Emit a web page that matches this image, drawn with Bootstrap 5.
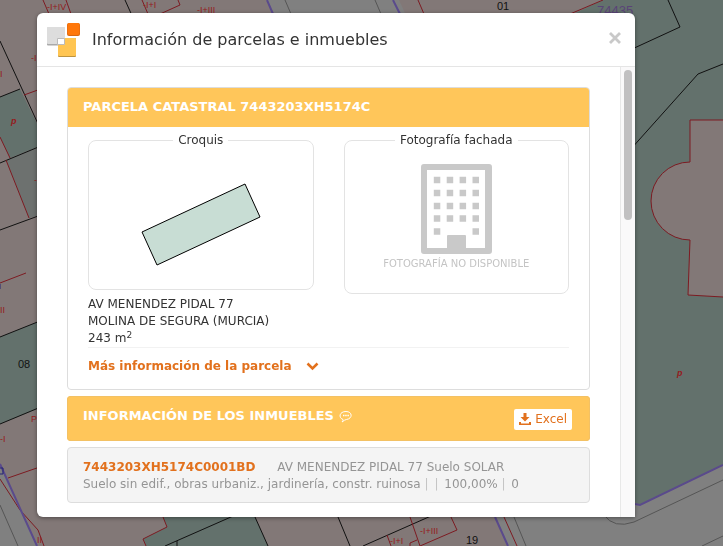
<!DOCTYPE html>
<html lang="es">
<head>
<meta charset="utf-8">
<meta name="viewport" content="width=device-width, initial-scale=1">
<title>Información de parcelas e inmuebles</title>
<link href="https://cdn.jsdelivr.net/npm/bootstrap@5.3.0/dist/css/bootstrap.min.css" rel="stylesheet">
<style>
  body { font-family: Verdana, "DejaVu Sans", sans-serif; font-size: 12px; line-height: 17px; color: #333; background: #827877; min-height: 100vh; }
  .map-canvas { position: fixed; inset: 0; width: 100%; height: 100%; z-index: -1; }
  .dialog-wrap { padding: 13px 88px 29px 37px; }
  .dialog-box { background: #fff; border-radius: 6px 6px 0 6px; box-shadow: 0 1px 4px rgba(0,0,0,.4); }
  .dialog-head { height: 54px; padding: 0 12px 0 9px; border-bottom: 1px solid #e5e5e5; }
  .dialog-title { font-size: 16px; line-height: 24px; font-weight: 400; margin: 0 0 0 10px; }
  .close-btn { color: #c9c9c9; line-height: 0; padding: 2px; }
  .dialog-content { padding: 20px 30px 14px; min-width: 0; }
  .track { width: 15px; background: #faf9fa; border-left: 1px solid #e8e8e8; padding: 3px; }
  .thumb { width: 8px; height: 150px; border-radius: 4px; background: #c1c0c1; }
  .stack { gap: 6px; }
  .panel { border: 1px solid #ddd; border-radius: 4px; }
  .panel-title { background: #ffc65a; color: #fff; font-weight: 700; font-size: 13px; line-height: 18px; margin: 0; }
  .parcel-title { padding: 10px 15px 11px; border-radius: 3px 3px 0 0; }
  .panel-inner { padding: 5px 20px 14px; }
  .frames { gap: 30px; }
  .frame-col { flex: 1 1 0; min-width: 0; }
  .frame { border: 1px solid #e3e3e3; border-radius: 8px; height: 158px; }
  .frame-photo { height: 162px; }
  .frame legend { float: none; width: auto; margin: 0 auto; padding: 0 5px; font-size: 12px; line-height: 17px; }
  .plot-sketch { margin-top: 33px; }
  .building { margin-top: 15px; }
  .no-photo { color: #c4c4c4; font-size: 10px; line-height: 14px; margin-top: 3px; }
  .address { margin: 6px 0 0; }
  .address sup { font-size: 9px; line-height: 0; top: -4px; vertical-align: baseline; }
  .divider { margin: 0; color: #ccc; }
  .accent { color: #e2711d; font-weight: 700; text-decoration: none; }
  .more-link { margin-top: 10px; gap: 14px; }
  .units-title { padding: 11px 18px 10px 16px; border-radius: 4px; box-shadow: inset 0 0 0 1px #f3c164; min-height: 45px; }
  .excel-btn { background: #fff; color: #e2711d; font-size: 12px; line-height: 17px; padding: 2px 5px; border-radius: 2px; border: 0; margin-top: 2px; }
  .unit { background: #f4f4f4; color: #959595; padding: 11px 15px 9px; }
  .unit-address { margin-left: 18px; }
  .sep { color: #c4c4c4; margin-right: 2px; }
</style>
<script src="https://cdn.jsdelivr.net/npm/bootstrap@5.3.0/dist/js/bootstrap.bundle.min.js"></script>
</head>
<body>
<svg class="map-canvas" viewBox="0 0 723 546" preserveAspectRatio="xMidYMid slice" aria-hidden="true" font-family="Liberation Sans, sans-serif">
  <rect width="723" height="546" fill="#827877"/>
  <path fill="#808080" d="M267 0H399L410 24H280ZM0 464L37 546H0ZM490 500L508 546H723V465L640 504L600 500Z"/>
  <path fill="#63716c" d="M0 97L20 89L50 150V142L10 158L0 137ZM0 337L60 313V400L0 424ZM163 517H255L268 546H146L143 539L167 527ZM603 0H723V465L640 505L630 500V20H560Z"/>
  <path fill="#6d716f" d="M6 160L60 138V210L29 218Z"/>
  <path fill="#827877" d="M723 120H690V162A39 39 0 0 0 690 240L688 295L723 297Z"/>
  <g fill="none" stroke="#111" stroke-width="1">
    <path d="M0 41L50 150M0 97L20 89M0 163L60 138M0 230L60 208M0 337L60 313M0 424L60 399M125 0L134 20M165 546L240 513M177 541V546M255 517L268 546M338 517L350 546M363 546L440 512M668 0L680 27L630 50M723 64L698 74L630 150"/>
  </g>
  <g fill="none" stroke="#7d1b22" stroke-width="1">
    <path d="M43 0L49 14M66 0L71 14M142 0L148 14M178 0L180 5L160 14M24 95L60 82M0 137L10 158M6 160L29 218M0 283L26 273M8 478L60 460M163 517L167 527L143 539L146 546M410 517L420 546M387 535L391 546M451 517L457 530L420 546M417 540L410 543V546M504 517L517 546M418 0L424 14M603 0L570 14M723 120H690V162A39 39 0 0 0 690 240L688 295L723 297M0 479L20 510L38 530L44 546"/>
  </g>
  <g fill="none" stroke="#5a4a8c" stroke-width="2"><path d="M0 464L37 546M267 0L273 14M393 0L400 14M495 517L508 546M635 504L640 505L723 465"/></g>
  <g fill="none" stroke="#555" stroke-width="1"><path d="M0 505L18 546M285 0L291 14M375 0L381 14M514 517L526 546M604 515Q614 529 634 522L723 480M702 546L723 536"/></g>
  <g fill="#941c20" font-size="9">
    <text x="47" y="10">-I+IV</text><text x="143" y="8">-I+I</text><text x="197" y="13">-I+III</text><text x="31" y="61">-I</text>
    <text x="0" y="77">I</text><text x="34" y="183">-I</text><text x="0" y="313">II</text>
    <text x="31" y="422">P</text><text x="0" y="442">-I</text><text x="37" y="543">II</text><text x="420" y="534">-I+III</text>
    <text x="390" y="544">-I+I</text>
  </g>
  <g fill="#941c20" font-size="9" font-weight="700" font-style="italic"><text x="11" y="124">p</text><text x="677" y="376">p</text></g>
  <g fill="#111" font-size="11"><text x="497" y="10">01</text><text x="18" y="368">08</text><text x="466" y="544">19</text></g>
  <text x="597" y="15" fill="#5a4478" font-size="13">74435</text>
  <path d="M-3 468H3V474H-3M0 284V289" fill="none" stroke="#252575"/>
</svg>

<div class="dialog-wrap">
  <main class="dialog-box" role="dialog" aria-labelledby="dlg-title">
    <header class="dialog-head d-flex align-items-center">
      <svg width="36" height="36" viewBox="0 0 36 36" aria-hidden="true">
        <rect x="1" y="5.500" width="18" height="18" rx="1" fill="#aaa"/><rect x="1" y="5" width="18" height="17" rx="1" fill="#ddd"/>
        <rect x="21" y="1" width="13" height="13" rx="2" fill="#d86710"/><rect x="21.500" y="1" width="12" height="12" rx="2" fill="#ff770a"/>
        <rect x="12" y="16" width="18" height="19" rx="1" fill="#bd933f"/><rect x="12" y="16" width="18" height="18" rx="1" fill="#ffc552"/>
        <path d="M11.500 16.500H18.500V22.500H11.500Z" fill="#fff" stroke="#bbb" stroke-width="1"/>
      </svg>
      <h1 class="dialog-title flex-grow-1" id="dlg-title">Información de parcelas e inmuebles</h1>
      <button type="button" class="close-btn bg-transparent border-0" aria-label="Cerrar">
        <svg width="12" height="16" viewBox="0 0 12 16" aria-hidden="true"><path d="M1 1L11 11M11 1L1 11" stroke="currentColor" stroke-width="2.800"/></svg>
      </button>
    </header>
    <div class="d-flex">
      <div class="dialog-content stack d-flex flex-column flex-grow-1">
        <section class="panel">
          <h2 class="panel-title parcel-title">PARCELA CATASTRAL 7443203XH5174C</h2>
          <div class="panel-inner">
            <div class="frames d-flex align-items-start">
              <div class="frame-col">
                <fieldset class="frame">
                  <legend>Croquis</legend>
                  <svg class="plot-sketch d-block mx-auto" width="122" height="84" viewBox="0 0 122 84" role="img" aria-label="Croquis de la parcela"><path d="M2 50L105 2L120 35L17 83Z" fill="#c8ddd4" stroke="#000"/></svg>
                </fieldset>
                <p class="address text-nowrap">AV MENENDEZ PIDAL 77<br>MOLINA DE SEGURA (MURCIA)<br>243 m<sup>2</sup></p>
              </div>
              <div class="frame-col">
                <fieldset class="frame frame-photo text-center">
                  <legend>Fotografía fachada</legend>
                  <svg class="building d-block mx-auto" width="71" height="90" viewBox="0 0 71 90" aria-hidden="true">
                    <path fill="#c9c9c9" fill-rule="evenodd" d="M3 0H68Q71 0 71 3V87Q71 90 68 90H3Q0 90 0 87V3Q0 0 3 0ZM6 6V84H26V72Q26 71 27 71H44Q45 71 45 72V84H64V6Z"/>
                    <path fill="none" stroke="#c9c9c9" stroke-width="6.500" stroke-dasharray="6.500 6.400" d="M12.800 16H58M12.800 29H58M12.800 42H58M12.800 54.500H58M12.800 67.500H19.300M51.500 67.500H58"/>
                  </svg>
                  <div class="no-photo text-nowrap">FOTOGRAFÍA NO DISPONIBLE</div>
                </fieldset>
              </div>
            </div>
            <hr class="divider">
            <a href="#" class="accent more-link d-inline-flex align-items-center">Más información de la parcela
              <svg width="13" height="9" viewBox="0 0 13 9" aria-hidden="true"><path d="M1.500 1.500L6.500 6.500L11.500 1.500" fill="none" stroke="currentColor" stroke-width="2.500"/></svg>
            </a>
          </div>
        </section>
        <section class="units-title panel-title d-flex align-items-start justify-content-between">
          <h2 class="panel-title bg-transparent">INFORMACIÓN DE LOS INMUEBLES
            <svg width="14" height="13" viewBox="0 0 14 13" aria-hidden="true"><path d="M4 9.500C-1 7.500 .5 1.500 7 1.500S14 8.500 7.500 9.500Q6 9.500 3 12Q4.500 10.500 4 9.500Z" fill="none" stroke="#fff"/><path d="M4 5.500H10" stroke="#fff" stroke-width="1.500" stroke-dasharray="1.500 .7"/></svg>
          </h2>
          <button type="button" class="excel-btn d-flex align-items-center gap-1">
            <svg width="12" height="13" viewBox="0 0 12 13" aria-hidden="true"><path d="M4.500 0H7.500V4H10.500L6 8.500L1.500 4H4.500ZM0 9H2V10.500H10V9H12V12H0Z" fill="currentColor"/></svg>Excel
          </button>
        </section>
        <section class="panel unit">
          <div><a href="#" class="accent">7443203XH5174C0001BD</a> <span class="unit-address">AV MENENDEZ PIDAL 77 Suelo SOLAR</span></div>
          <div>Suelo sin edif., obras urbaniz., jardinería, constr. ruinosa <span class="sep">|</span> <span class="sep">|</span> 100,00% <span class="sep">|</span> 0</div>
        </section>
      </div>
      <div class="track flex-shrink-0"><div class="thumb"></div></div>
    </div>
  </main>
</div>
</body>
</html>
